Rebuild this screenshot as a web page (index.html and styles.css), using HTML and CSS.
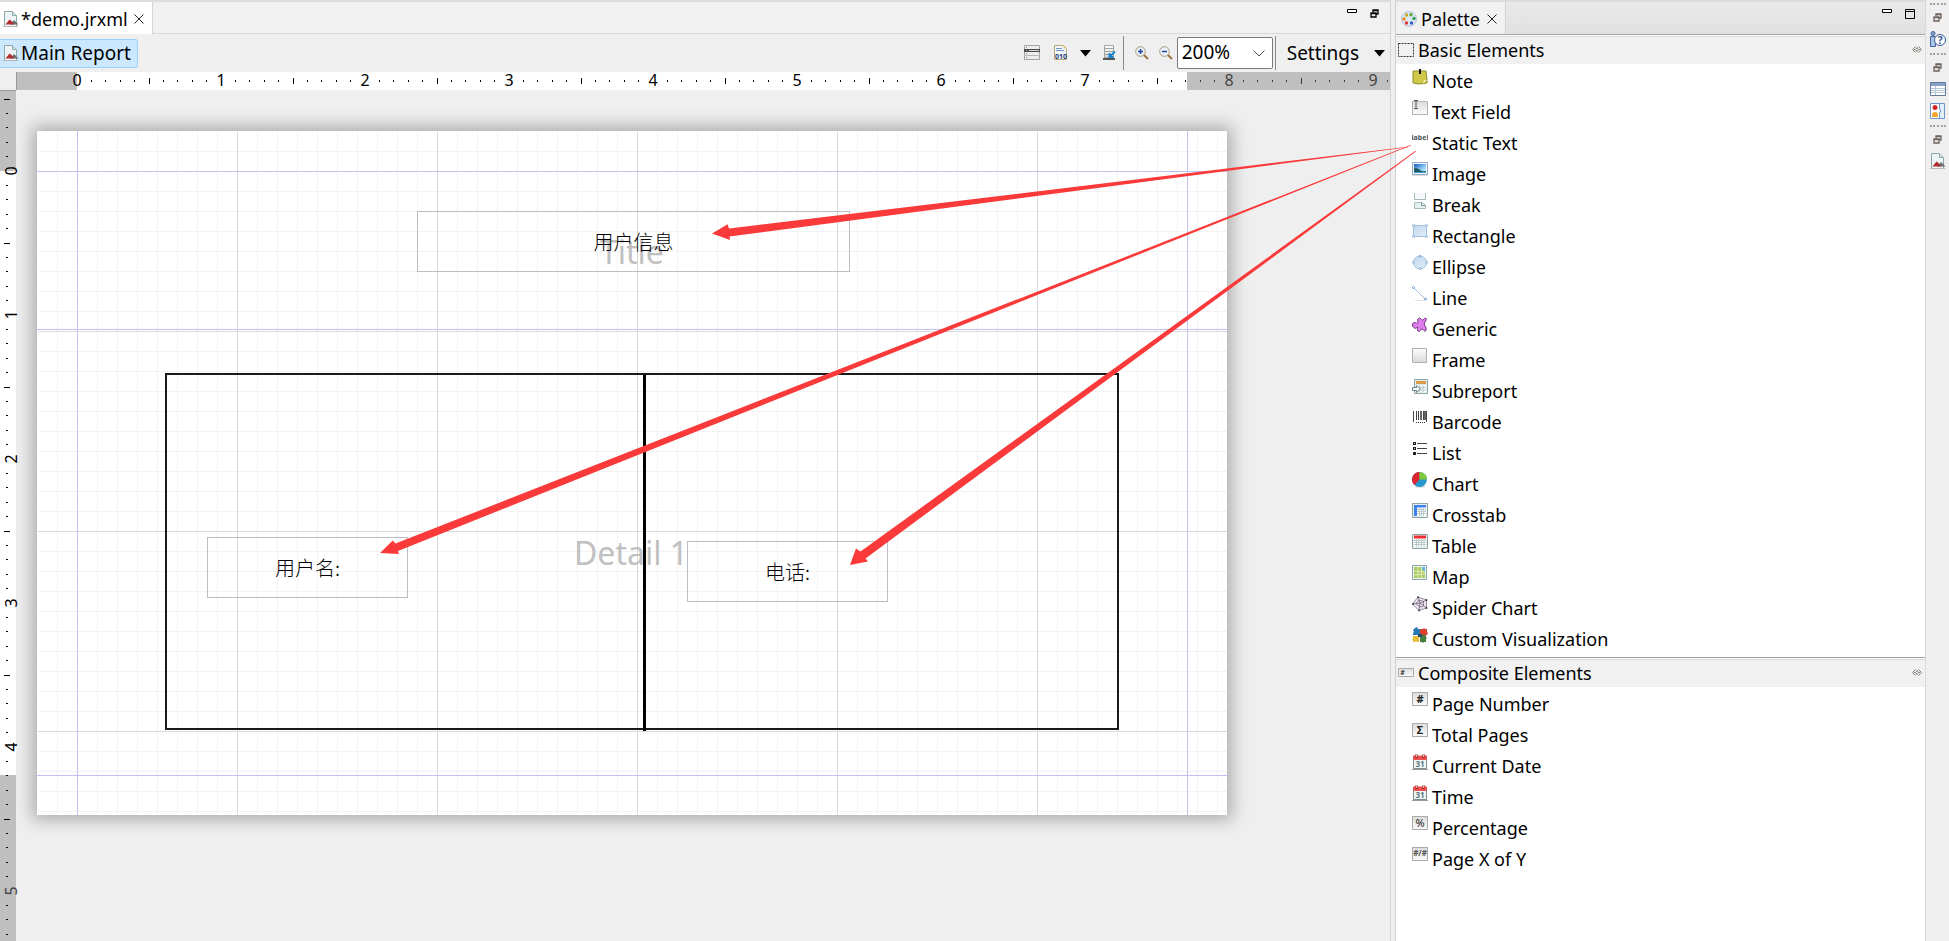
FILE: index.html
```html
<!DOCTYPE html>
<html lang="en">
<head>
<meta charset="utf-8">
<title>demo.jrxml</title>
<link rel="stylesheet" href="styles.css">
</head>
<body>
<svg class="defs" aria-hidden="true">
  <defs>
    <linearGradient id="gGrey" x1="0" y1="0" x2="0" y2="1"><stop offset="0" stop-color="#fdfdfd"/><stop offset="1" stop-color="#d9d9d9"/></linearGradient>
    <linearGradient id="gDark" x1="0" y1="0" x2="0" y2="1"><stop offset="0" stop-color="#dcdcdc"/><stop offset="1" stop-color="#fbfbfb"/></linearGradient>
    <linearGradient id="gBlue" x1="0" y1="0" x2="1" y2="1"><stop offset="0" stop-color="#c3d9ee"/><stop offset="1" stop-color="#e2ecf7"/></linearGradient>
    <linearGradient id="gSky" x1="0" y1="0" x2="1" y2="1"><stop offset="0" stop-color="#1552c0"/><stop offset=".6" stop-color="#8fd0f4"/><stop offset="1" stop-color="#d5f0fb"/></linearGradient>
    <symbol id="report" viewBox="0 0 16 16">
      <path d="M1.500.5h8l4 4v11h-12z" fill="#eef5f5" stroke="#8fa9ab"/>
      <path d="M9.500.5v4h4" fill="#cfe0e0" stroke="#8fa9ab"/>
      <path d="M7 13.500l4-4.500 4.500 4.500z" fill="#6d6d70"/>
      <path d="M2.500 13.500l4-5 2 1.500 2.500 3.500z" fill="#b32c2f"/>
      <path d="M0 15.500h15" stroke="#b9b9b9"/>
    </symbol>
    <symbol id="close" viewBox="0 0 10 10"><path d="M.5.5l9 9M9.500.5l-9 9" stroke="#222" fill="none"/></symbol>
    <symbol id="restore" viewBox="0 0 9 9"><path d="M3 3V1h5v4H6M1 4h5v4H1zM1 4.500h5M3 1.500h5" fill="none" stroke="currentColor" stroke-width="1.300"/></symbol>
    <symbol id="pin" viewBox="0 0 10 7"><path d="M3.500.5l-3 3 3 3M6.500.5l3 3-3 3M2 3.500h1M7 3.500h1M5 1.500l-1.500 2 1.500 2M5 1.500l1.500 2-1.500 2" fill="none" stroke="#77756a" stroke-width=".9"/></symbol>
    <symbol id="sheet" viewBox="0 0 16 16"><path d="M.5.5h15v14H.5z" fill="#e3eeee" stroke="#8ea5a6"/><path d="M2 2h12v11H2z" fill="#fff"/></symbol>
    <symbol id="cal" viewBox="0 0 16 16">
      <path d="M1.500 2.500h13v12h-13z" fill="#f1f7f7" stroke="#7d8a8c"/><path d="M1 1.500h14V6H1z" fill="#ea5252"/>
      <path d="M4.500 0v4M11.500 0v4" stroke="#9c1d1d" stroke-width="2"/><path d="M4.500 0v3M11.500 0v3" stroke="#fff" stroke-width=".7"/>
      <text x="8" y="13" class="cal-day">31</text><path d="M0 15.500h16" stroke="#999"/>
    </symbol>
  </defs>
</svg>

<div class="app">
  <main class="editor">
    <header class="tabbar">
      <div class="tab tab-editor"><svg class="i16"><use href="#report"/></svg><span>*demo.jrxml</span><button class="plain" aria-label="Close"><svg class="i10"><use href="#close"/></svg></button></div>
      <div class="window-buttons">
        <button class="plain" aria-label="Minimize"><svg class="min" viewBox="0 0 10 5"><path d="M.5.5h9v3h-9z" fill="#fff" stroke="#000"/></svg></button>
        <button class="plain" aria-label="Restore"><svg class="i9"><use href="#restore"/></svg></button>
      </div>
    </header>

    <div class="toolbar">
      <button class="crumb"><svg class="i16"><use href="#report"/></svg>Main Report</button>
      <div class="tools">
        <button class="plain dataset" aria-label="Dataset"><svg class="i16" viewBox="0 0 16 16"><path d="M.5.5h15v14H.5z" fill="#ededed" stroke="#a3a3a3"/><path d="M0 4h16v3H0z" fill="#4d4d4d"/><path d="M5 5.500h10" stroke="#cfcfcf"/><path d="M0 10.500h16" stroke="#b5b5b5"/><path d="M2 2.500h1M2 5.500h1M2 8.500h1M2 12.500h1" stroke="#888"/></svg></button>
        <button class="plain compile" aria-label="Source"><svg class="i16" viewBox="0 0 16 16"><path d="M1.500.5h9l3 3v11h-12z" fill="#f2f6fd" stroke="#b8a878"/><path d="M10.500.5v3h3z" fill="#e5c765"/><path d="M3 3.500h6M3 5.500h8" stroke="#6f93c9"/><text x="8" y="14" class="bits">010</text></svg></button>
        <button class="plain arrow-a" aria-label="More"><svg class="tri" viewBox="0 0 11 7"><path d="M0 0h11L5.500 6.500z"/></svg></button>
        <button class="plain preview" aria-label="Preview"><svg class="i16" viewBox="0 0 16 16"><path d="M2.500.5h9v12h-9z" fill="url(#gGrey)" stroke="#a5a5a5"/><path d="M2 3.500h10M2 6.500h10M2 9.500h10" stroke="#a2a2a2"/><path d="M1 14h12" stroke="#555" stroke-width="2"/><path d="M13 6.500L8.500 11M7.500 8v4h4" fill="none" stroke="#1687cf" stroke-width="2"/></svg></button>
        <span class="sep"></span>
        <button class="plain zoom-in" aria-label="Zoom in"><svg class="i14" viewBox="0 0 14 14"><circle cx="5.500" cy="5.500" r="4.800" fill="#edf3fb" stroke="#a79878"/><path d="M9 9l4 4" stroke="#9a7242" stroke-width="2"/><path d="M3 5.500h5M5.500 3v5" stroke="#24459a" stroke-width="1.500"/></svg></button>
        <button class="plain zoom-out" aria-label="Zoom out"><svg class="i14" viewBox="0 0 14 14"><circle cx="5.500" cy="5.500" r="4.800" fill="#edf3fb" stroke="#a79878"/><path d="M9 9l4 4" stroke="#9a7242" stroke-width="2"/><path d="M3 5.500h5" stroke="#24459a" stroke-width="1.500"/></svg></button>
        <span class="combo">
          <select aria-label="Zoom level"><option>200%</option></select>
          <svg class="chev" viewBox="0 0 12 7"><path d="M.5.5L6 6 11.500.5" fill="none" stroke="#555"/></svg>
        </span>
        <span class="sep near"></span>
        <button class="plain settings">Settings<svg class="tri" viewBox="0 0 11 7"><path d="M0 0h11L5.500 6.500z"/></svg></button>
      </div>
    </div>

    <svg class="hruler" aria-hidden="true">
      <defs><pattern id="hticks" x="61" width="144" height="18" patternUnits="userSpaceOnUse">
        <path d="M14 8h1v2h-1zM28 8h1v2h-1zM43 8h1v2h-1zM57 8h1v2h-1zM72 6h1v6h-1zM86 8h1v2h-1zM100 8h1v2h-1zM115 8h1v2h-1zM129 8h1v2h-1z"/></pattern></defs>
      <rect width="100%" height="18" fill="#fff"/>
      <rect width="61" height="18" fill="#bfbfbf"/>
      <path d="M.5 0v18" stroke="#999"/>
      <rect x="61" width="100%" height="18" fill="url(#hticks)"/>
      <rect x="1171" width="100%" height="18" fill="#bfbfbf"/>
      <rect x="1171" width="100%" height="18" fill="url(#hticks)" opacity=".7"/>
      <g class="marks"><text x="61" y="14">0</text><text x="205" y="14">1</text><text x="349" y="14">2</text><text x="493" y="14">3</text><text x="637" y="14">4</text><text x="781" y="14">5</text><text x="925" y="14">6</text><text x="1069" y="14">7</text><text x="1213" y="14" fill="#444">8</text><text x="1357" y="14" fill="#444">9</text></g>
    </svg>

    <div class="workspace">
      <svg class="vruler" aria-hidden="true">
        <defs><pattern id="vticks" y="81" width="16" height="144" patternUnits="userSpaceOnUse">
          <path d="M6 14h2v1h-2zM6 28h2v1h-2zM6 43h2v1h-2zM6 57h2v1h-2zM4 72h6v1h-6zM6 86h2v1h-2zM6 100h2v1h-2zM6 115h2v1h-2zM6 129h2v1h-2z"/></pattern></defs>
        <rect width="16" height="81" fill="#bfbfbf"/>
        <rect y="81" width="16" height="604" fill="#fff"/>
        <rect y="685" width="16" height="100%" fill="#bfbfbf"/>
        <path d="M0 .5h16" stroke="#999"/>
        <rect width="16" height="100%" fill="url(#vticks)"/>
        <g class="marks"><text transform="translate(17 81) rotate(-90)">0</text><text transform="translate(17 225) rotate(-90)">1</text><text transform="translate(17 369) rotate(-90)">2</text><text transform="translate(17 513) rotate(-90)">3</text><text transform="translate(17 657) rotate(-90)">4</text><text transform="translate(17 801) rotate(-90)" fill="#444">5</text></g>
      </svg>
      <div class="canvas">
        <section class="page">
          <svg class="grid" aria-hidden="true">
            <defs>
              <pattern id="minor" width="20" height="20" patternUnits="userSpaceOnUse"><path d="M0 .5h20M.5 0v20" stroke="#f3f3f3"/></pattern>
              <pattern id="major" width="200" height="200" patternUnits="userSpaceOnUse"><path d="M0 .5h200M.5 0v200" stroke="#d9d9d9"/></pattern>
            </defs>
            <rect width="100%" height="100%" fill="url(#minor)"/>
            <rect width="100%" height="100%" fill="url(#major)"/>
            <path d="M0 0h1190v1H0zM0 0h1v684H0z" fill="#fff"/>
            <path d="M40.500 0v684M1150.500 0v684M0 40.500h1190M0 198.500h1190M0 644.500h1190" stroke="#c4c0f4"/>
          </svg>
          <span class="band band-title">Title</span>
          <span class="band band-detail">Detail 1</span>
          <div class="box-frame"></div>
          <div class="divider"></div>
          <div class="field field-title">用户信息</div>
          <div class="field field-name">用户名:</div>
          <div class="field field-phone">电话:</div>
        </section>
      </div>
    </div>
  </main>

  <aside class="palette">
    <header class="tabbar palette-bar">
      <div class="tab tab-palette"><svg class="i16" viewBox="0 0 16 16"><circle cx="8" cy="8" r="7.500" fill="#dfe8f5" stroke="#b4c4dc"/><circle cx="5.500" cy="4" r="1.700" fill="#c3a51e"/><circle cx="10" cy="3.800" r="1.700" fill="#57a639"/><circle cx="13" cy="7.500" r="1.700" fill="#2f9e4e"/><circle cx="3" cy="8" r="1.700" fill="#ec8a1d"/><circle cx="5.500" cy="12" r="1.700" fill="#d8342b"/><circle cx="10.500" cy="12" r="1.700" fill="#2c5fc3"/></svg><span>Palette</span><button class="plain" aria-label="Close"><svg class="i10"><use href="#close"/></svg></button></div>
      <div class="window-buttons">
        <button class="plain" aria-label="Minimize"><svg class="min" viewBox="0 0 10 5"><path d="M.5.5h9v3h-9z" fill="#fff" stroke="#000"/></svg></button>
        <button class="plain" aria-label="Maximize"><svg class="i10" viewBox="0 0 10 10"><path d="M.5.5h9v9h-9zM0 2.500h10" fill="none" stroke="#000"/></svg></button>
      </div>
    </header>

    <section class="drawer">
      <h2><svg class="i16" viewBox="0 0 16 16"><path d="M.5 1.500h15v13H.5z" fill="none" stroke="#333" stroke-dasharray="2 1"/></svg><span>Basic Elements</span><svg class="pin"><use href="#pin"/></svg></h2>
      <ul>
        <li><button><svg class="i16" viewBox="0 0 16 16"><path d="M1 2h13l1 9v3l-8 1-6-1z" fill="#cfc94b" stroke="#8f8a26"/><path d="M11 15l4-4h-3z" fill="#f0ecac"/><path d="M8 0v5" stroke="#111" stroke-width="2"/></svg>Note</button></li>
        <li><button><svg class="i16" viewBox="0 0 16 16"><path d="M.5 1.500h15v13H.5z" fill="url(#gDark)" stroke="#b5b5b5"/><path d="M2 .5h4M4 .5v8M2 8.500h4" stroke="#555"/></svg>Text Field</button></li>
        <li><button><svg class="i16" viewBox="0 0 16 16"><text x="8" y="9" class="tiny">label</text></svg>Static Text</button></li>
        <li><button><svg class="i16" viewBox="0 0 16 16"><path d="M.5.5h15v12H.5z" fill="#f4f8fd" stroke="#93a9c9"/><path d="M2 2h12v9H2z" fill="url(#gSky)"/><path d="M2 6q4 0 6 2t6 1v2H2z" fill="#1e5a62"/><path d="M2 10h12v1H2z" fill="#3aa0cc"/><path d="M0 13.500h16" stroke="#ddd"/></svg>Image</button></li>
        <li><button><svg class="i16" viewBox="0 0 16 16"><path d="M2.500 0v6.500h11V0" fill="#f4f8f8" stroke="#a9bcbc"/><path d="M2.500 15.500v-6h8l3 3v3z" fill="#e6efef" stroke="#a9bcbc"/><path d="M9.500 9.500v3h4" fill="none" stroke="#7e9797"/></svg>Break</button></li>
        <li><button><svg class="i16" viewBox="0 0 16 16"><path d="M1.500 1.500h13v11h-13z" fill="url(#gBlue)" stroke="#a3bfdf"/><g fill="#fff" stroke="#7fa6d3"><circle cx="1.500" cy="1.500" r="1"/><circle cx="14.500" cy="1.500" r="1"/><circle cx="1.500" cy="12.500" r="1"/><circle cx="14.500" cy="12.500" r="1"/></g></svg>Rectangle</button></li>
        <li><button><svg class="i16" viewBox="0 0 16 16"><circle cx="8" cy="7.500" r="6.500" fill="url(#gBlue)" stroke="#a3bfdf"/><g fill="#fff" stroke="#7fa6d3"><circle cx="8" cy="1.200" r="1"/><circle cx="14.500" cy="7.500" r="1"/><circle cx="1.500" cy="7.500" r="1"/><circle cx="8.500" cy="13.500" r="1"/></g></svg>Ellipse</button></li>
        <li><button><svg class="i16" viewBox="0 0 16 16"><path d="M3 14.500h10" stroke="#e4e4e4"/><path d="M2 2l11 11" stroke="#9dbce0"/><g fill="#fff" stroke="#6c9bd0"><circle cx="1.500" cy="1.500" r="1"/><circle cx="13.500" cy="13" r="1"/></g></svg>Line</button></li>
        <li><button><svg class="i16" viewBox="0 0 16 16"><path d="M6 5.500C5 3 6 1 7.500 1S9 3 10.500 3 12 .5 13.500 1 14 4 13 5s-1 3 0 4 2 4 .5 5-2-2-3.500-2-2 3-3.500 2.500S5 12 6 10c-2 .500-2 2-3.500 1S.5 9.500.5 8 1 5.500 2.500 5.500 5 7 6 5.500z" fill="#df7cee" stroke="#6f3a7c"/></svg>Generic</button></li>
        <li><button><svg class="i16" viewBox="0 0 16 16"><path d="M.5.5h14v14H.5z" fill="url(#gGrey)" stroke="#b0b0b0"/></svg>Frame</button></li>
        <li><button><svg class="i16" viewBox="0 0 16 16"><path d="M2.500.5h13v14h-13z" fill="#e3eeee" stroke="#8ea5a6"/><path d="M4 2h10v3H4z" fill="#d99a4b"/><path d="M4 6h10v7H4z" fill="#fff"/><path d="M4 8.500h10M4 11h10M7.500 6v7M11 6v7" stroke="#b5c6c6"/><path d="M.5 8.500h4v-2l4 3.500-4 3.500v-2h-4z" fill="#eef6f6" stroke="#6f8789"/></svg>Subreport</button></li>
        <li><button><svg class="i16" viewBox="0 0 16 16"><path d="M1.500 1v11M4.500 1v9M6.500 1v9M11.500 1v9M14.500 1v11" stroke="#444"/><path d="M9 1v9M13 1v9" stroke="#333" stroke-width="1.500"/><path d="M4 12.500h9" stroke="#333" stroke-dasharray="1 1"/></svg>Barcode</button></li>
        <li><button><svg class="i16" viewBox="0 0 16 16"><path d="M5 2.500h10M5 7.500h10M5 12.500h10" stroke="#444"/><path d="M1 2.500h3M1 7.500h3M1 12.500h3" stroke="#222" stroke-width="3"/><path d="M2 2.500h1M2 7.500h1" stroke="#bbb"/></svg>List</button></li>
        <li><button><svg class="i16" viewBox="0 0 16 16"><ellipse cx="8" cy="14.500" rx="5" ry="1" fill="#ccc"/><circle cx="7.500" cy="7.500" r="7.500" fill="#2798cc"/><path d="M7.500 7.500V0a7.500 7.500 0 0 0-5 13z" fill="#de2430"/><path d="M7.500 7.500V0A7.500 7.500 0 0 1 15 7.500z" fill="#84c93b"/></svg>Chart</button></li>
        <li><button><svg class="i16" viewBox="0 0 16 16"><use href="#sheet"/><path d="M2 2h12v2.500H2zM2 2h3v11H2z" fill="#3f83f0"/><path d="M5 6.500h9M5 8.500h9M5 10.500h9M7.500 5v8M9.500 5v8M11.500 5v8" stroke="#bccaca"/></svg>Crosstab</button></li>
        <li><button><svg class="i16" viewBox="0 0 16 16"><use href="#sheet"/><path d="M2 1.500h12v3H2z" fill="#f02f2f"/><path d="M2 6.500h12M2 8.500h12M2 10.500h12M4.500 5v8M7 5v8M9.500 5v8M12 5v8" stroke="#bccaca"/></svg>Table</button></li>
        <li><button><svg class="i16" viewBox="0 0 16 16"><path d="M.5.5h14v14H.5z" fill="#eef4f4" stroke="#8ea5a6"/><path d="M2 2h11v11H2z" fill="#a9c766"/><path d="M9 2h4v5z" fill="#55b4ec"/><path d="M6 2v11M9.500 2v11M2 6l11 1M2 10l11-1" stroke="#e1edb4"/></svg>Map</button></li>
        <li><button><svg class="i16" viewBox="0 0 16 16"><path d="M6 1l8.500 3v8L7 14.500.5 8z" fill="#efe4f3" stroke="#77717d" stroke-width=".8"/><path d="M6 1l2 6 6.500-3M8 7l6.500 5M8 7l-1 7.500M8 7L.5 8M7 4l4.500 1.500V10L8 11 4 7.500z" fill="none" stroke="#6c6475" stroke-width=".8"/><g fill="#444"><circle cx="6" cy="1.300" r="1"/><circle cx="14.500" cy="4" r="1"/><circle cx="14.500" cy="12" r="1"/><circle cx="7" cy="14.500" r="1"/><circle cx="1" cy="8" r="1"/></g></svg>Spider Chart</button></li>
        <li><button><svg class="i16" viewBox="0 0 16 16"><path d="M3 1l2-1 1 2 2 0v6H1V6l1-1-1-2z" fill="#2878b5"/><path d="M8 2h3l1-1 1 1h2v3l1 1-1 2H8z" fill="#d9402e"/><path d="M1 9h6v6H5l-1-1-1 1H1v-2l-1-1 1-1z" fill="#e7bd35"/><path d="M8 8h6v2l1 1-1 1v3h-2l-1 1-1-1H8z" fill="#47803d"/><path d="M6 7h4v3H6z" fill="#234e68"/></svg>Custom Visualization</button></li>
      </ul>
    </section>

    <section class="drawer">
      <h2><svg class="i16" viewBox="0 0 16 16"><path d="M.5 3.500h15v8H.5z" fill="url(#gDark)" stroke="#aaa"/><text x="4.500" y="10" class="hash-s">#</text></svg><span>Composite Elements</span><svg class="pin"><use href="#pin"/></svg></h2>
      <ul>
        <li><button><svg class="i16" viewBox="0 0 16 16"><path d="M.5.5h15v13H.5z" fill="url(#gDark)" stroke="#aaa"/><text x="8" y="11" class="glyph">#</text></svg>Page Number</button></li>
        <li><button><svg class="i16" viewBox="0 0 16 16"><path d="M.5.5h15v13H.5z" fill="url(#gDark)" stroke="#aaa"/><text x="8" y="11" class="glyph">Σ</text></svg>Total Pages</button></li>
        <li><button><svg class="i16"><use href="#cal"/></svg>Current Date</button></li>
        <li><button><svg class="i16"><use href="#cal"/></svg>Time</button></li>
        <li><button><svg class="i16" viewBox="0 0 16 16"><path d="M.5.5h15v13H.5z" fill="url(#gDark)" stroke="#aaa"/><text x="8" y="11" class="glyph light">%</text></svg>Percentage</button></li>
        <li><button><svg class="i16" viewBox="0 0 16 16"><path d="M.5.5h15v13H.5z" fill="url(#gDark)" stroke="#aaa"/><text x="8" y="9" class="xofy">#/#</text></svg>Page X of Y</button></li>
      </ul>
    </section>
  </aside>

  <nav class="strip" aria-label="Minimized views">
    <div class="group">
      <button class="plain dim" aria-label="Restore"><svg class="i9"><use href="#restore"/></svg></button>
      <button class="plain" aria-label="Help"><svg class="i16" viewBox="0 0 16 16"><circle cx="3" cy="2.500" r="2" fill="#7ea6d6" stroke="#41659a"/><path d="M.5 5.500h5v10h-5z" fill="#a9c5e6" stroke="#41659a"/><circle cx="10" cy="9" r="5.500" fill="#fff" stroke="#3c5a96"/><text x="10" y="13" class="help">?</text></svg></button>
    </div>
    <div class="group">
      <button class="plain dim" aria-label="Restore"><svg class="i9"><use href="#restore"/></svg></button>
      <button class="plain" aria-label="Properties"><svg class="i16" viewBox="0 0 16 16"><path d="M.5 1.500h15v13H.5z" fill="#fff" stroke="#5f789e"/><path d="M1 2h14v3H1z" fill="#8aa2c4"/><path d="M1 7.500h14M1 9.500h14M1 11.500h14M5.500 5v9" stroke="#b9c6da"/></svg></button>
      <button class="plain" aria-label="Problems"><svg class="i16" viewBox="0 0 16 16"><path d="M.5.5h14v15H.5z" fill="#e3eefc" stroke="#6f96c9"/><path d="M1 1h8v14H1z" fill="#fff"/><path d="M9.500 1v5q3 2 0 4v5" fill="none" stroke="#6f96c9"/><circle cx="5" cy="4.500" r="2.500" fill="#d9242b"/><path d="M2 14v-2q0-3 3-3t3 3v2z" fill="#f2a72e"/></svg></button>
    </div>
    <div class="group">
      <button class="plain dim" aria-label="Restore"><svg class="i9"><use href="#restore"/></svg></button>
      <button class="plain" aria-label="Report"><svg class="i16"><use href="#report"/></svg></button>
    </div>
  </nav>

  <svg class="arrows" aria-hidden="true">
    <path d="M712 233.500L727.700 224.300 729 228.500 1408 146.700 1408 147.200 729.500 236.500 730 240z"/>
    <path d="M380 553L392.700 540.500 395.500 543.500 1411 144.800 1411 145.500 398 551 399 554z"/>
    <path d="M850 565L856 548.500 860.500 551.500 1415.500 150.800 1416 151.500 865.500 558.500 868 561.500z"/>
  </svg>
</div>
</body>
</html>
```

FILE: styles.css
```css
* { box-sizing: border-box; }
html, body { height: 100%; }
body {
  margin: 0;
  background: #efefef;
  color: #000;
  font: 18px/24px "Noto Sans", "Noto Sans CJK SC", sans-serif;
  overflow: hidden;
}
svg { display: block; flex: none; }
button, select { font: inherit; color: inherit; }
.defs { position: absolute; width: 0; height: 0; }

.app {
  position: relative;
  display: grid;
  grid-template-columns: minmax(0, 1fr) 531px 23px;
  height: 100%;
}

.plain { display: flex; align-items: center; padding: 0; border: 0; background: none; }
.i9 { width: 9px; height: 9px; }
.i10 { width: 10px; height: 10px; }
.i14 { width: 14px; height: 14px; }
.i16 { width: 16px; height: 16px; }
.min { width: 10px; height: 5px; }
.tri { width: 11px; height: 7px; }

/* Editor */
.editor {
  display: flex;
  flex-direction: column;
  min-width: 0;
  margin-right: 4px;
  border-right: 1px solid #d4d4d4;
}
.tabbar {
  display: flex;
  justify-content: space-between;
  height: 34px;
  border-top: 2px solid #dcdcdc;
  border-bottom: 1px solid #d9d9d9;
  background: #f1f1f1;
}
.tab { display: flex; align-items: center; padding-top: 2px; border-right: 1px solid #d4d4d4; }
.tab-editor { gap: 2px; width: 153px; height: 32px; padding-left: 3px; background: #fff; }
.tab .plain { margin-left: auto; margin-right: 8px; }
.window-buttons { display: flex; gap: 13px; align-items: flex-start; padding: 7px 11px 0 0; }

.toolbar { display: flex; align-items: center; justify-content: space-between; height: 38px; font-size: 19px; }
.crumb {
  display: flex;
  align-items: center;
  gap: 2px;
  height: 29px;
  padding: 0 6px 0 3px;
  border: 1px solid #99d1ff;
  border-left: 0;
  border-radius: 0 3px 3px 0;
  background: #cce8ff;
}
.tools { display: flex; align-items: center; padding-right: 5px; }
.compile { margin-left: 13px; }
.arrow-a { margin-left: 11px; }
.preview { margin-left: 11px; }
.sep { width: 1px; height: 34px; margin-left: 5px; background: #8a8a8a; }
.zoom-in { margin-left: 11px; }
.zoom-out { margin-left: 10px; }
.near { margin-left: 2px; }
.combo { position: relative; margin-left: 4px; }
.combo select {
  display: block;
  width: 96px;
  height: 32px;
  padding: 0 4px 2px;
  border: 1px solid #7a7a7a;
  border-radius: 2px;
  background: #fff;
  appearance: none;
}
.chev { position: absolute; right: 8px; top: 13px; width: 12px; height: 7px; pointer-events: none; }
.settings { gap: 15px; margin-left: 11px; }

.hruler { width: calc(100% - 16px); height: 18px; margin-left: 16px; overflow: visible; clip-path: inset(-8px 0); }
.marks { font-size: 16px; text-anchor: middle; }
.workspace { display: flex; flex: 1; min-height: 0; }
.vruler { width: 16px; height: 100%; overflow: visible; position: relative; z-index: 1; }
.canvas { flex: 1; padding: 41px 0 0 21px; overflow: hidden; }

/* Report page: items sit where the designer dropped them */
.page {
  position: relative;
  width: 1190px;
  height: 684px;
  background: #fff;
  box-shadow: 0 0 16px 5px rgba(0, 0, 0, .28);
}
.grid { width: 100%; height: 100%; }
.band { position: absolute; color: #c0c0c0; font-size: 32px; line-height: 44px; }
.band-title { left: 563px; top: 99px; }
.band-detail { left: 537px; top: 400px; }
.box-frame { position: absolute; left: 128px; top: 242px; width: 954px; height: 357px; border: 2px solid #1a1a1a; }
.divider { position: absolute; left: 606px; top: 244px; width: 3px; height: 356px; background: #000; }
.field {
  position: absolute;
  display: flex;
  align-items: center;
  justify-content: center;
  border: 1px solid #bdbdc6;
  font: 300 20px/24px "Noto Sans CJK SC", sans-serif;
}
.field-title { left: 380px; top: 80px; width: 433px; height: 61px; }
.field-name { left: 170px; top: 406px; width: 201px; height: 61px; }
.field-phone { left: 650px; top: 410px; width: 201px; height: 61px; }

/* Palette */
.palette { border-left: 1px solid #d0d0d0; border-right: 1px solid #d9d9d9; background: #fff; }
.palette-bar { height: 35px; border-bottom-color: #a0a0a0; background: linear-gradient(#e9e9e9, #e1e1e1); }
.tab-palette { gap: 4px; width: 110px; padding-left: 5px; background: #f1f1f1; }
.palette .window-buttons { padding-right: 10px; }
.drawer { padding-top: 1px; }
.drawer + .drawer { border-top: 1px solid #a0a0a0; }
.drawer h2 {
  display: flex;
  align-items: center;
  gap: 4px;
  height: 28px;
  margin: 0;
  padding: 0 3px 2px 2px;
  border-top: 1px solid #d9d9d9;
  background: #f1f1f1;
  font-size: 18px;
  font-weight: 400;
}
.pin { width: 10px; height: 7px; margin-left: auto; }
.drawer ul { margin: 0; padding: 2px 0; list-style: none; }
.drawer li button {
  display: flex;
  gap: 4px;
  width: 100%;
  height: 31px;
  padding: 3px 0 4px 16px;
  border: 0;
  background: none;
  text-align: left;
}

/* Side strip */
.strip { display: flex; flex-direction: column; gap: 6px; padding: 3px 3px 0 4px; }
.group { display: flex; flex-direction: column; gap: 6px; padding-top: 8px; border-top: 2px dotted #a8a29e; }
.group .dim { margin: 0 0 3px 3px; color: #6b625c; }

/* Annotation arrows over editor and palette */
.arrows { position: absolute; left: 0; top: 0; width: 100%; height: 100%; pointer-events: none; fill: #fa3a3a; }

/* Lettering inside icons */
.cal-day { font: 700 8px "Noto Sans", sans-serif; text-anchor: middle; fill: #5c7477; }
.bits { font: 700 7px "Noto Sans", sans-serif; text-anchor: middle; fill: #1c3f7c; }
.tiny { font: 700 7px "Noto Sans", sans-serif; text-anchor: middle; fill: #4a4f55; }
.hash-s { font: 700 7px "Noto Sans", sans-serif; text-anchor: middle; fill: #333; }
.glyph { font: 700 11px "Noto Sans", sans-serif; text-anchor: middle; fill: #222; }
.light { font-weight: 400; }
.xofy { font: 700 8px "Noto Sans", sans-serif; text-anchor: middle; fill: #555; }
.help { font: 700 11px "Noto Sans", sans-serif; text-anchor: middle; fill: #3c5a96; }
```
